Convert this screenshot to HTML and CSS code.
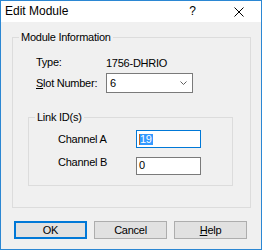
FILE: index.html
```html
<!DOCTYPE html>
<html>
<head>
<meta charset="utf-8">
<link rel="stylesheet" href="styles.css">
</head>
<body>
<div class="window">
  <div class="titlebar">
    <span class="title">Edit Module</span>
    <span class="help-q">?</span>
    <svg class="close" width="10" height="10" viewBox="0 0 10 10"><path d="M0.5 0.5L9.5 9.5M9.5 0.5L0.5 9.5" stroke="#000" stroke-width="1" fill="none"/></svg>
  </div>
  <div class="client">
    <div class="group outer">
      <span class="group-label">Module Information</span>
      <div class="form-grid">
        <span class="lbl">Type:</span>
        <span class="val">1756-DHRIO</span>
        <span class="lbl"><u>S</u>lot Number:</span>
        <div class="combo">
          <span class="combo-text">6</span>
          <svg class="chev" width="7" height="4" viewBox="0 0 7 4"><path d="M0.5 0.5L3.5 3.5L6.5 0.5" stroke="#606060" stroke-width="1" fill="none"/></svg>
        </div>
      </div>
      <div class="group inner">
        <span class="group-label">Link ID(s)</span>
        <div class="link-grid">
          <span class="lbl">Channel A</span>
          <div class="edit focused"><span class="caret"></span><span class="sel">19</span></div>
          <span class="lbl lbl-raised">Channel B</span>
          <div class="edit"><span class="edit-text">0</span></div>
        </div>
      </div>
    </div>
    <div class="buttons">
      <button class="btn default">OK</button>
      <button class="btn">Cancel</button>
      <button class="btn"><u>H</u>elp</button>
    </div>
  </div>
</div>
</body>
</html>
```

FILE: styles.css
```css
html, body {
  margin: 0;
  padding: 0;
  background: #ffffff;
}

body {
  font-family: "Liberation Sans", Arial, sans-serif;
  font-size: 11px;
  color: #000;
}

.window {
  width: 262px;
  height: 250px;
  box-sizing: border-box;
  border: 1px solid #2b87d3;
  background: #f0f0f0;
  display: flex;
  flex-direction: column;
}

.titlebar {
  height: 21px;
  flex: none;
  background: #ffffff;
  display: flex;
  align-items: center;
  padding: 0 17px 0 4px;
}

.title {
  flex: 1;
  font-size: 12px;
  line-height: 21px;
}

.help-q {
  font-size: 12px;
  line-height: 21px;
  margin-right: 38px;
}

.close {
  display: block;
}

.client {
  flex: 1;
  padding: 15px 0 0 11px;
  letter-spacing: -0.25px;
}

.group {
  position: relative;
  box-sizing: border-box;
  border: 1px solid #dcdcdc;
}

.group-label {
  position: absolute;
  top: -7px;
  left: 6px;
  padding: 0 2px;
  line-height: 13px;
  background: #f0f0f0;
  white-space: nowrap;
}

.outer {
  width: 239px;
  height: 171px;
  padding-top: 17px;
}

.lbl, .val {
  line-height: 13px;
  white-space: nowrap;
}

.val {
  margin-top: 2px;
}

.form-grid {
  display: grid;
  grid-template-columns: 70px 87px;
  row-gap: 3px;
  align-items: center;
  padding-left: 23px;
}

.combo {
  box-sizing: border-box;
  height: 20px;
  border: 1px solid #7a7a7a;
  background: #fff;
  display: flex;
  align-items: center;
  padding: 0 5px 0 3px;
}

.combo-text {
  flex: 1;
  line-height: 13px;
}

.chev {
  display: block;
}

.inner {
  margin: 24px 0 0 15px;
  width: 205px;
  height: 69px;
  padding: 12px 0 0 29px;
}

.link-grid {
  display: grid;
  grid-template-columns: 78px 65px;
  row-gap: 8px;
  align-items: center;
}

.lbl-raised {
  margin-bottom: 6px;
}

.edit {
  box-sizing: border-box;
  height: 18px;
  border: 1px solid #7a7a7a;
  background: #fff;
  display: flex;
  align-items: center;
  padding-left: 2px;
}

.edit.focused {
  border-color: #0078d7;
}

.caret {
  width: 1px;
  height: 11px;
  background: #c4641c;
}

.sel {
  background: #3399ff;
  color: #fff;
  line-height: 11px;
  padding-right: 1px;
}

.edit-text {
  line-height: 13px;
}

.buttons {
  display: flex;
  gap: 7px;
  margin: 13px 0 0 2px;
}

.btn {
  box-sizing: border-box;
  width: 73px;
  height: 18px;
  margin: 0;
  padding: 0;
  border: 1px solid #adadad;
  background: #e1e1e1;
  font-family: "Liberation Sans", Arial, sans-serif;
  font-size: 11px;
  letter-spacing: -0.25px;
  color: #000;
  line-height: 13px;
}

.btn.default {
  border: 2px solid #0078d7;
}
```
